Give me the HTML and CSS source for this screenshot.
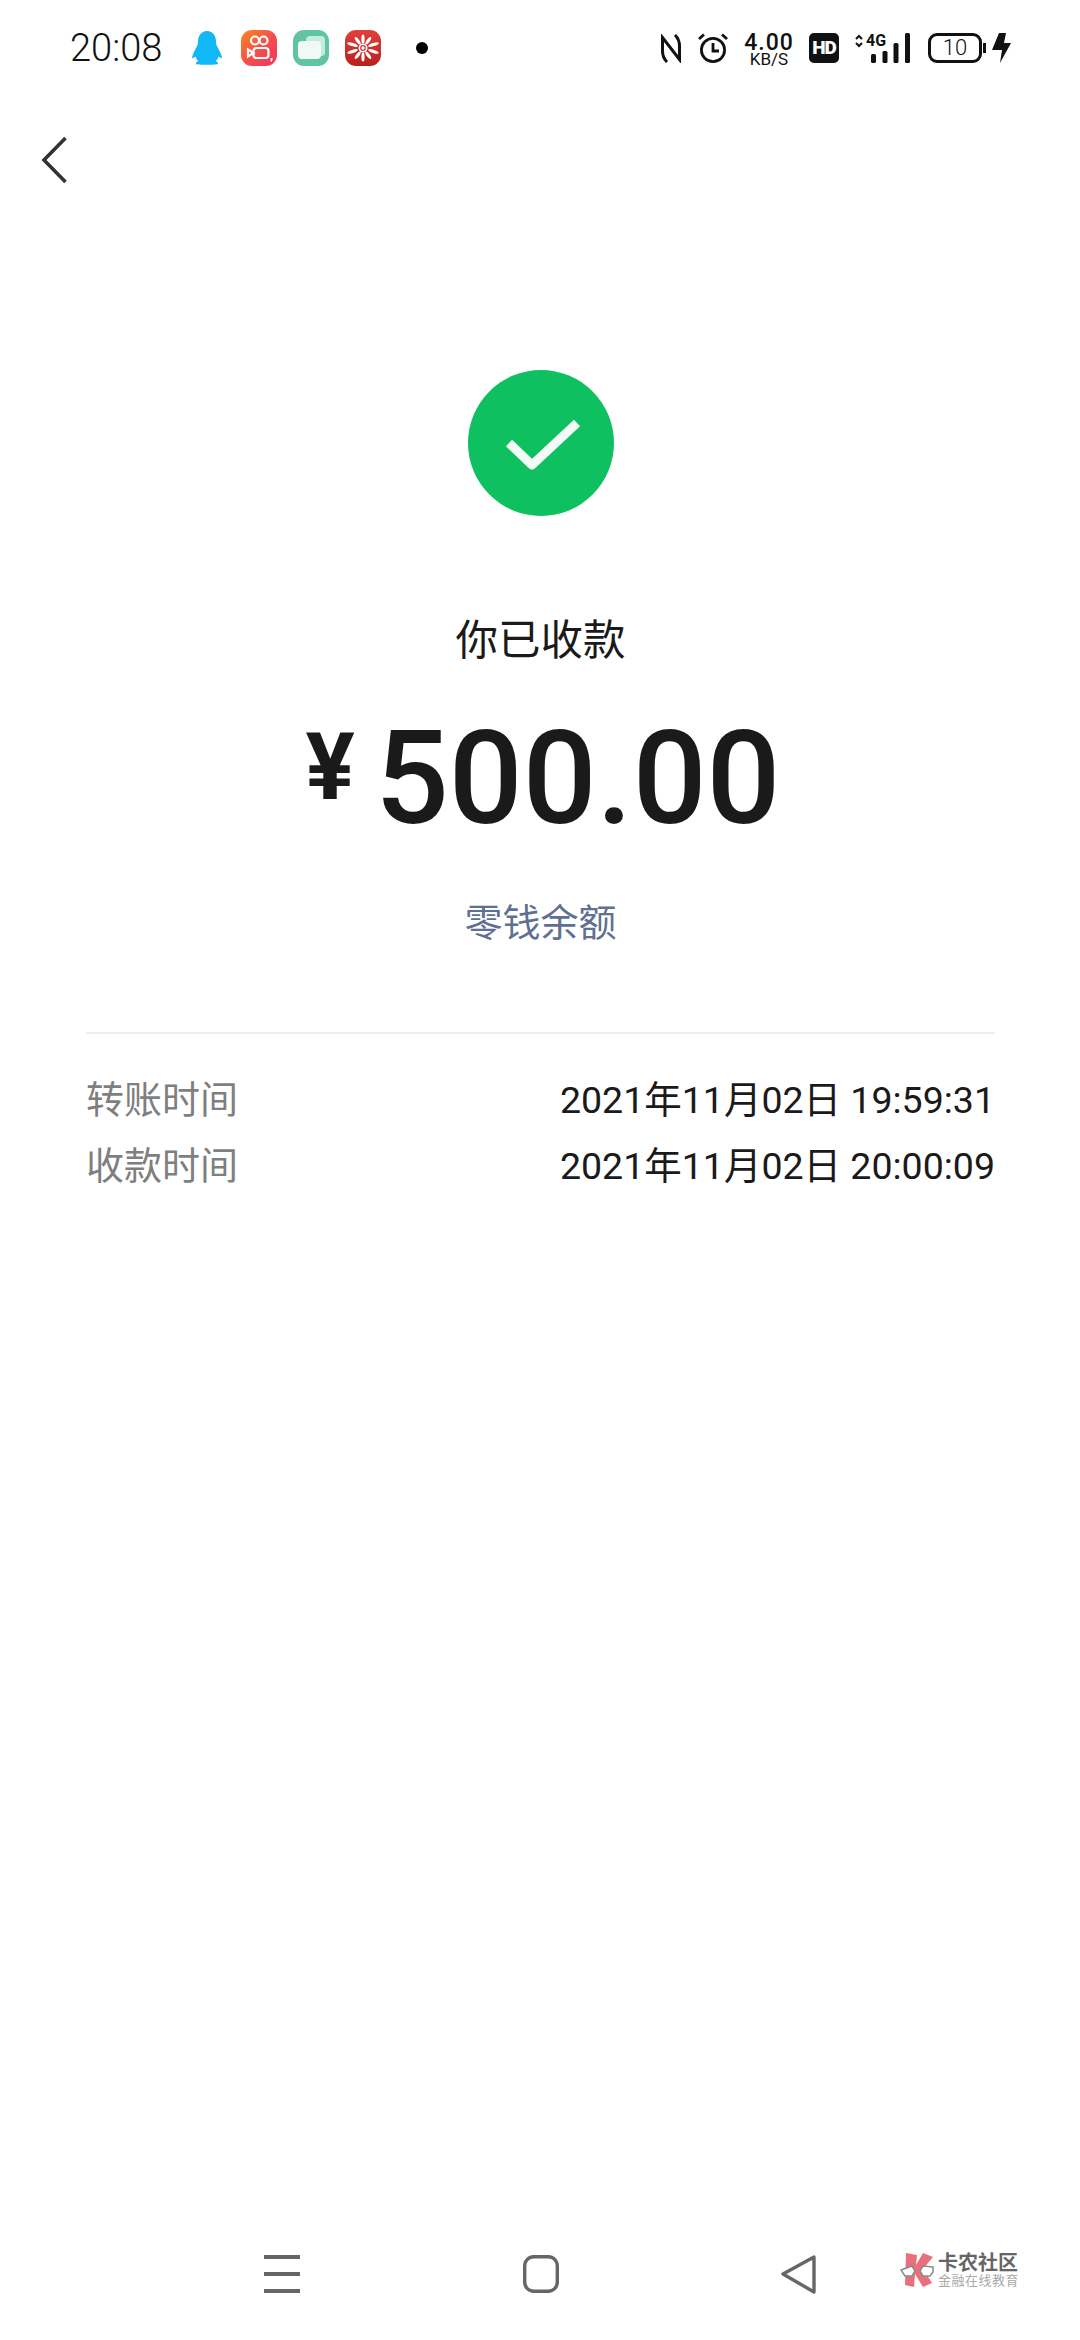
FILE: index.html
```html
<!DOCTYPE html>
<html lang="zh">
<head>
  <meta charset="utf-8">
  <title>你已收款</title>
  <link rel="stylesheet" href="styles.css">
</head>
<body>
  <div class="status">
    <span class="time">20:08</span>
    <div class="apps">
      <svg class="penguin" width="30" height="34" viewBox="0 0 30 34"><path fill="#12b7f5" d="M15 0c-6 0-9 5-9 11 0 2-.5 3-1.500 5C3 19 .5 23 0 27c1 .5 2.500-.5 3.500-1.500 .5 2 1.500 3.500 3 4.500-1.500 .5-3 1.500-2.500 3 .5 1 21 1 22 0 .5-1.500-1-2.500-2.500-3 1.500-1 2.500-2.500 3-4.500 1 1 2.500 2 3.500 1.500-.5-4-3-8-4.500-11-1-2-1.500-3-1.500-5C24 5 21 0 15 0z"/></svg>
      <svg width="36" height="36" viewBox="0 0 36 36">
        <defs><linearGradient id="ks" x1="0" y1="0" x2="1" y2="1"><stop offset="0" stop-color="#f98a1e"/><stop offset=".5" stop-color="#f5504a"/><stop offset="1" stop-color="#f2335f"/></linearGradient></defs>
        <rect width="36" height="36" rx="11" fill="url(#ks)"/>
        <g fill="none" stroke="#fff" stroke-width="2.200">
          <circle cx="14" cy="10.500" r="4"/><circle cx="22.500" cy="10.500" r="4"/>
          <rect x="12.500" y="18" width="15" height="10" rx="3"/>
          <path d="M12.500 23l-5.500-3.500v7z"/>
        </g>
        <path d="M29.500 28.500l1.500 .5-1 2.500" fill="none" stroke="#fff" stroke-width="1.500"/>
      </svg>
      <svg width="36" height="36" viewBox="0 0 36 36">
        <rect width="36" height="36" rx="11" fill="#5fc3a4"/>
        <rect x="13" y="6" width="19" height="20" rx="4" fill="#c5ebe0"/>
        <rect x="5" y="11" width="23" height="18" rx="4" fill="#f1f9f6"/>
      </svg>
      <svg width="36" height="36" viewBox="0 0 36 36">
        <defs><linearGradient id="fl" x1="0" y1="0" x2="0" y2="1"><stop offset="0" stop-color="#e0413c"/><stop offset="1" stop-color="#b9201f"/></linearGradient></defs>
        <rect width="36" height="36" rx="11" fill="url(#fl)"/>
        <g fill="#fff">
          <ellipse cx="18" cy="9" rx="1.600" ry="4.500"/>
          <ellipse cx="18" cy="9" rx="1.600" ry="4.500" transform="rotate(36 18 18)"/>
          <ellipse cx="18" cy="7" rx="1.600" ry="5.500" transform="rotate(72 18 18)"/>
          <ellipse cx="18" cy="7" rx="1.600" ry="5.500" transform="rotate(108 18 18)"/>
          <ellipse cx="18" cy="9" rx="1.600" ry="4.500" transform="rotate(144 18 18)"/>
          <ellipse cx="18" cy="9" rx="1.600" ry="4.500" transform="rotate(180 18 18)"/>
          <ellipse cx="18" cy="9" rx="1.600" ry="4.500" transform="rotate(216 18 18)"/>
          <ellipse cx="18" cy="7" rx="1.600" ry="5.500" transform="rotate(252 18 18)"/>
          <ellipse cx="18" cy="7" rx="1.600" ry="5.500" transform="rotate(288 18 18)"/>
          <ellipse cx="18" cy="9" rx="1.600" ry="4.500" transform="rotate(324 18 18)"/>
          <circle cx="18" cy="18" r="4.500"/>
        </g>
        <circle cx="18" cy="18" r="2.300" fill="none" stroke="#d23230" stroke-width="1.200"/>
      </svg>
    </div>
    <span class="dot"></span>
    <div class="sys">
      <svg class="nfc" width="22" height="29" viewBox="0 0 22 29" fill="none" stroke="#111" stroke-width="3"><path d="M7 28C4 25 2.500 21 2.500 17V3.500L19.500 25.500V12C19.500 8 18 4 15 1"/></svg>
      <svg class="alarm" width="30" height="30" viewBox="0 0 30 30" fill="none" stroke="#111" stroke-width="2.800"><circle cx="15" cy="17" r="11.600"/><path d="M15 10v8h6M1 6l5-4.500M29 6l-5-4.500"/></svg>
      <div class="speed"><b>4.00</b><small>KB/S</small></div>
      <span class="hd">HD</span>
      <div class="net">
        <svg width="8" height="14" viewBox="0 0 8 14" fill="none" stroke="#111" stroke-width="2"><path d="M1 5l3-3 3 3M1 9l3 3 3-3"/></svg>
        <span class="net-type">4G</span>
        <svg class="bars" width="39" height="30" viewBox="0 0 39 30" fill="#111"><rect y="21" width="5" height="9" rx="1.500"/><rect x="11.500" y="18" width="5" height="12" rx="1.500"/><rect x="22.500" y="10" width="5" height="20" rx="1.500"/><rect x="34" width="5" height="30" rx="1.500"/></svg>
      </div>
      <div class="battery"><span class="battery-box">10</span><span class="battery-nub"></span></div>
      <svg class="bolt" width="19" height="30" viewBox="0 0 19 30"><path fill="#111" d="M7 0h7l-2 10h7L8 30l2-13H0z"/></svg>
    </div>
  </div>

  <div class="topbar">
    <svg width="26" height="48" viewBox="0 0 26 48" fill="none" stroke="#333" stroke-width="3.600"><path d="M24.500 2L3 24l21.500 22"/></svg>
  </div>

  <main class="result">
    <svg class="ok" width="146" height="146" viewBox="0 0 146 146">
      <circle cx="73" cy="73" r="73" fill="#0ec060"/>
      <path d="M41 73l23 22 45-42" fill="none" stroke="#f4fbf7" stroke-width="9" stroke-linejoin="round"/>
    </svg>
    <div class="title">你已收款</div>
    <div class="amount"><span class="yen">¥</span><span class="num">500.00</span></div>
    <div class="source">零钱余额</div>

    <div class="details">
      <div class="row"><span class="key">转账时间</span><span class="val">2021年11月02日 19:59:31</span></div>
      <div class="row"><span class="key">收款时间</span><span class="val">2021年11月02日 20:00:09</span></div>
    </div>
  </main>

  <nav class="navbar">
    <svg width="36" height="38" viewBox="0 0 36 38" fill="#666"><rect width="36" height="4"/><rect y="17" width="36" height="4"/><rect y="34" width="36" height="4"/></svg>
    <svg width="36" height="38" viewBox="0 0 36 38" fill="none" stroke="#666" stroke-width="3.400"><rect x="1.700" y="1.700" width="32.600" height="34.600" rx="9"/></svg>
    <svg width="36" height="40" viewBox="0 0 36 40" fill="none" stroke="#666" stroke-width="3.400" stroke-linejoin="round"><path d="M33 3L2 20l31 18z"/></svg>
  </nav>

  <div class="mark">
    <svg width="36" height="36" viewBox="0 0 36 36">
      <path fill="#e8707a" d="M6 1l11 2-1 10 7-12 10 4-10 12 9 14-9 4-8-13-1 13-9-2z"/>
      <path fill="#fff" stroke="#8a8a8a" stroke-width="1.500" d="M1 18l11-4 3 5-3 5-7 0zM33 15l-10-1-3 5 3 5 7 0 3-4z"/>
    </svg>
    <div class="mark-text"><b>卡农社区</b><small>金融在线教育</small></div>
  </div>
</body>
</html>
```

FILE: styles.css
```css
* {
  box-sizing: border-box;
}
body {
  margin: 0;
  width: 1080px;
  height: 2340px;
  position: relative;
  display: flex;
  flex-direction: column;
  background-color: #fff;
  color: #1a1a1a;
  font-family: Roboto, "Noto Sans CJK SC", sans-serif;
  overflow: hidden;
}

/* status bar */
.status {
  height: 96px;
  flex: none;
  display: flex;
  align-items: center;
  padding: 0 69px 0 70px;
  color: #111;
}
.time {
  font-size: 38px;
  font-weight: 300;
  width: 92px;
  white-space: nowrap;
}
.apps {
  display: flex;
  align-items: center;
  gap: 16px;
  margin-left: 30px;
}
.penguin {
  margin-right: 3px;
}
.dot {
  width: 12px;
  height: 12px;
  border-radius: 50%;
  background-color: #000;
  margin-left: 35px;
}
.sys {
  margin-left: auto;
  display: flex;
  align-items: center;
}
.alarm {
  margin-left: 16px;
}
.speed {
  width: 52px;
  margin-left: 15px;
  display: flex;
  flex-direction: column;
  align-items: center;
  line-height: 1;
}
.speed b {
  font-size: 23px;
  font-weight: 500;
  letter-spacing: 1px;
  height: 20px;
}
.speed small {
  font-size: 17px;
  font-weight: 400;
  height: 15px;
}
.hd {
  width: 30px;
  height: 30px;
  margin-left: 14px;
  border-radius: 5px;
  background-color: #111;
  color: #fff;
  font-size: 19px;
  font-weight: 900;
  line-height: 30px;
  text-align: center;
  letter-spacing: -1px;
}
.net {
  position: relative;
  width: 55px;
  height: 30px;
  margin-left: 16px;
}
.net svg:first-child {
  position: absolute;
  left: 0;
  top: 1px;
}
.net-type {
  position: absolute;
  left: 11px;
  top: -1px;
  font-size: 16px;
  font-weight: 700;
  line-height: 18px;
}
.bars {
  position: absolute;
  right: 0;
  top: 0;
}
.battery {
  display: flex;
  align-items: center;
  margin-left: 18px;
}
.battery-box {
  width: 54px;
  height: 30px;
  border: 3px solid #111;
  border-radius: 9px;
  font-size: 22px;
  font-weight: 300;
  line-height: 24px;
  text-align: center;
}
.battery-nub {
  width: 3px;
  height: 10px;
  margin-left: 1px;
  background-color: #111;
}
.bolt {
  margin-left: 6px;
}

/* title bar */
.topbar {
  height: 100px;
  flex: none;
  padding: 40px 0 0 41px;
}

/* main block */
.result {
  display: flex;
  flex-direction: column;
  align-items: center;
  padding: 174px 85px 0 86px;
}
.title {
  margin-top: 95px;
  font-size: 42.500px;
  line-height: 60px;
}
.amount {
  display: flex;
  align-items: flex-start;
  height: 130px;
  margin-top: 43px;
  padding-left: 5px;
  font-weight: 500;
  line-height: 130px;
}
.yen {
  font-size: 92px;
  font-weight: 700;
  line-height: 90px;
  margin-top: 9px;
  margin-right: 20px;
}
.num {
  font-size: 130px;
}
.source {
  margin-top: 51px;
  font-size: 38px;
  line-height: 56px;
  color: #5f7094;
}
.details {
  align-self: stretch;
  margin-top: 81px;
  padding-top: 33px;
  border-top: 2px solid #eeeeee;
}
.row {
  display: flex;
  justify-content: space-between;
  height: 66px;
  font-size: 37.500px;
  line-height: 66px;
}
.key {
  font-size: 38px;
  color: #7f7f7f;
}

/* bottom navigation */
.navbar {
  margin-top: auto;
  height: 86px;
  padding: 0 263px 0 264px;
  margin-bottom: 23px;
  display: flex;
  justify-content: space-between;
  align-items: center;
}

/* watermark sits over the nav bar */
.mark {
  position: absolute;
  left: 900px;
  top: 2252px;
  display: flex;
  align-items: center;
  gap: 2px;
}
.mark-text {
  display: flex;
  flex-direction: column;
  color: #666;
  white-space: nowrap;
}
.mark-text b {
  font-size: 20px;
  line-height: 20px;
  font-weight: 700;
}
.mark-text small {
  font-size: 13px;
  line-height: 15px;
  letter-spacing: 0.500px;
  color: #aaa;
}
```
